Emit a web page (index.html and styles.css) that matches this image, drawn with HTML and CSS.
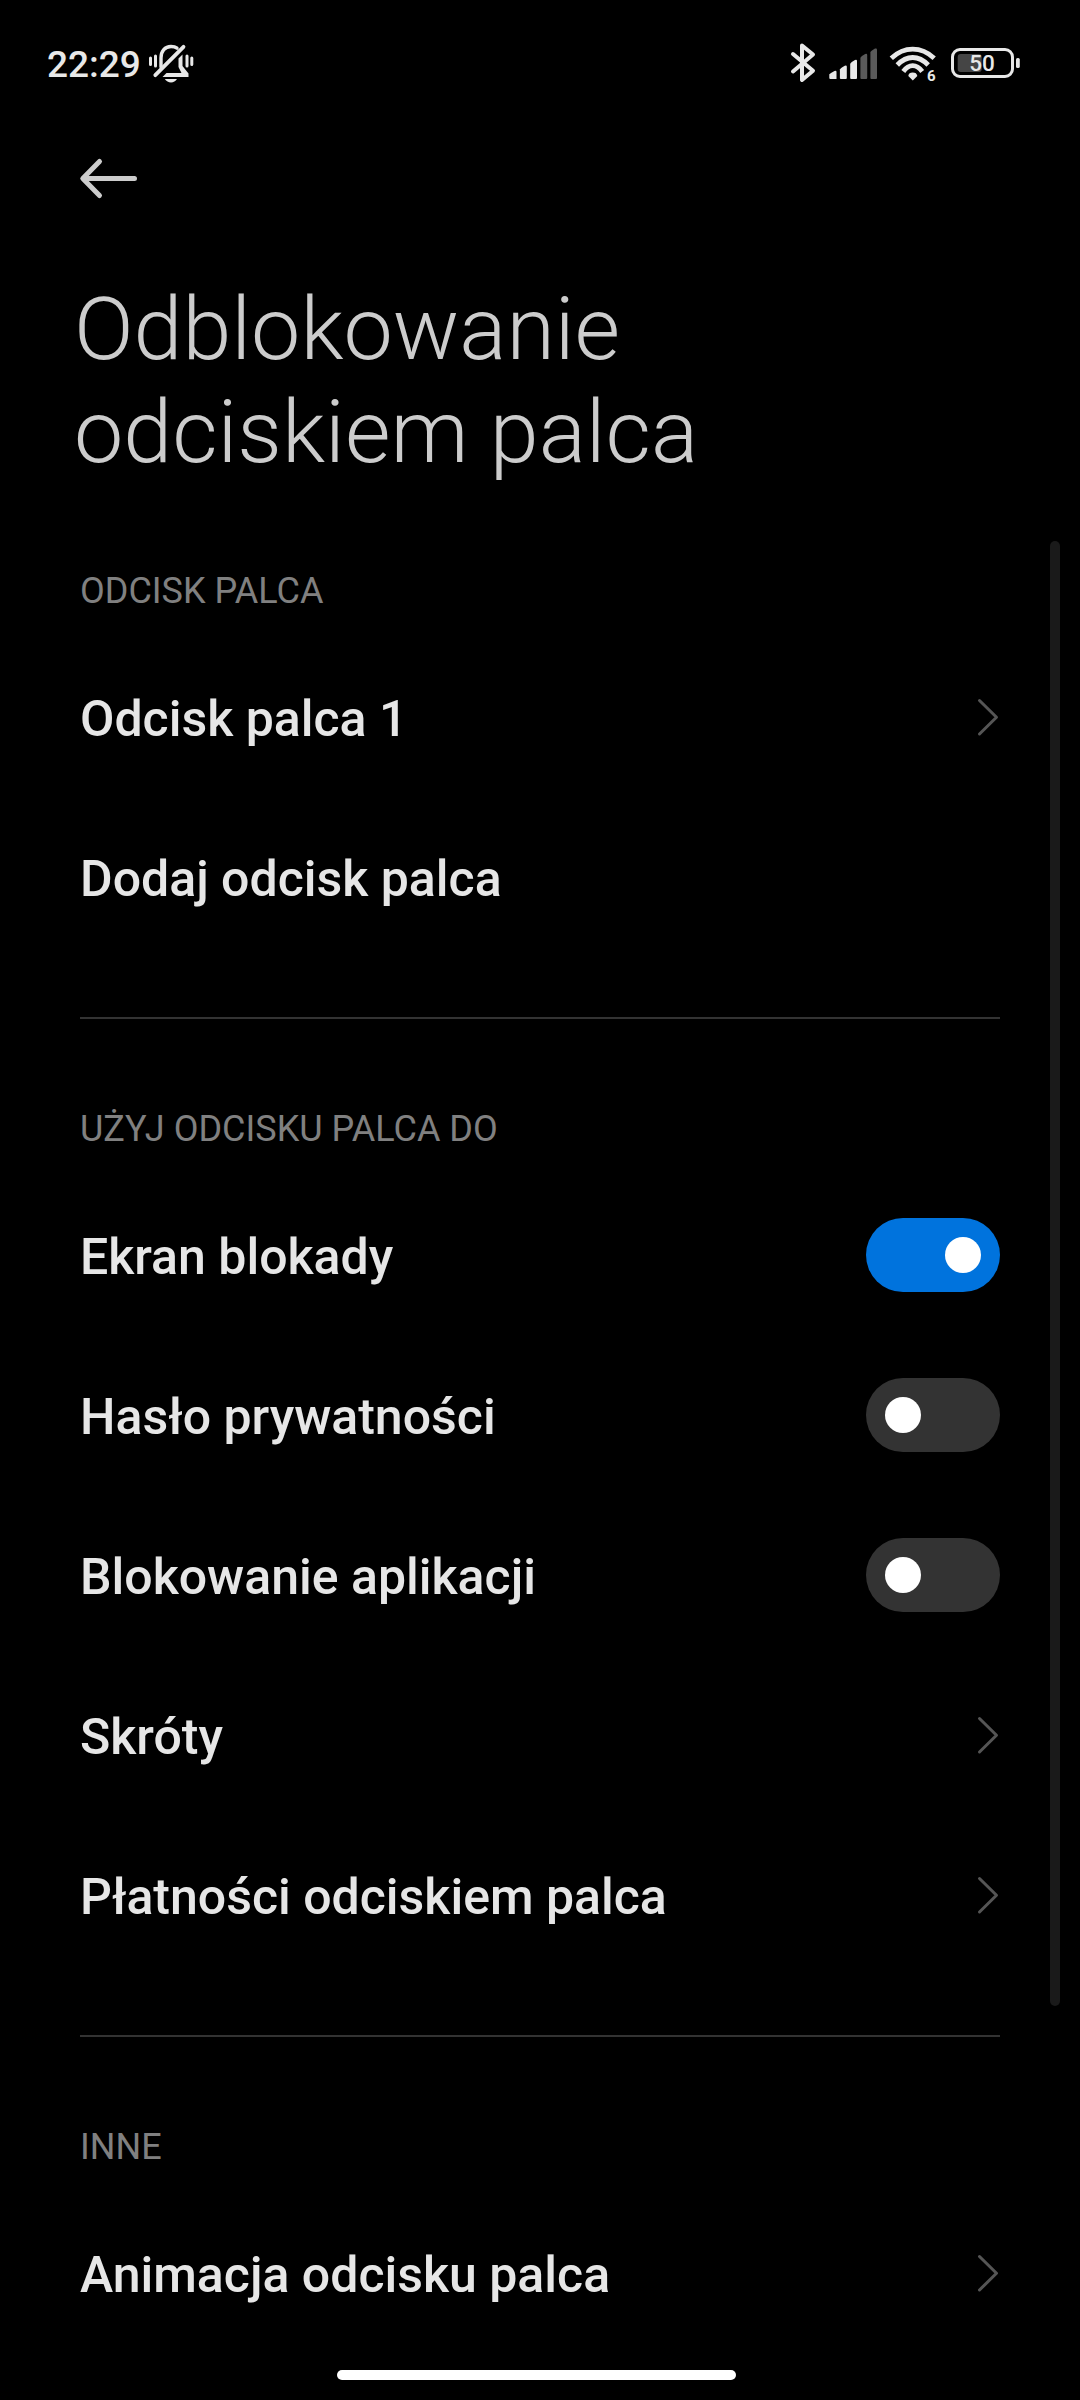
FILE: index.html
```
<!DOCTYPE html>
<html lang="pl">
<head>
<meta charset="utf-8">
<title>Odblokowanie odciskiem palca</title>
<link rel="stylesheet" href="styles.css">
</head>
<body>
<div class="screen">
  <header class="status">
    <div class="status-left">
      <span class="clock">22:29</span>
      <svg class="icon-mute" viewBox="148 42 48 42" width="48" height="42" fill="none" stroke="#e8e8e8" stroke-linecap="round" stroke-linejoin="round">
        <path d="M161 67V58C161 51 165 46.5 171 46.5C173.500 46.500 175.500 47 177 48.200" stroke-width="3.400"/>
        <path d="M155.300 75.200L183.500 46.800" stroke-width="3.800"/>
        <path d="M178.500 58.500L182.500 54.500V66L188.500 73.500V77H162.500L166.500 73H181.500L178.500 67Z" fill="#e8e8e8" stroke="none"/>
        <path d="M150.500 58V64.500M155.500 56V66M187 56V66M191.800 58V64.500" stroke-width="3"/>
        <path d="M164.800 79H177C175.500 81.300 173.500 82.500 171 82.500S166.300 81.300 164.800 79Z" fill="#e8e8e8" stroke="none"/>
      </svg>
    </div>
    <div class="status-right">
      <svg viewBox="789 42 28 42" width="28" height="42" fill="none" stroke="#e8e8e8" stroke-width="4" stroke-linecap="round" stroke-linejoin="round">
        <path d="M793 54L813 70.800L802 80V45.500L813 54.500L793 71.500"/>
      </svg>
      <svg class="icon-signal" viewBox="829 47 49 33" width="49" height="33">
        <g fill="#e8e8e8">
          <path d="M829.300 74.500Q829.500 73.500 834.500 71Q836.500 70.300 836.500 72V79H830.300Q829.300 79 829.300 78Z"/>
          <path d="M839.900 69.500Q840 68.500 844.800 65.700Q846.800 65 846.800 66.700V78Q846.800 79 845.800 79H840.900Q839.900 79 839.900 78Z"/>
          <path d="M850.200 64Q850.400 62.500 855 60Q857 59.300 857 61V78Q857 79 856 79H851.200Q850.200 79 850.200 78Z"/>
        </g>
        <g fill="#5a5a5a">
          <path d="M860.400 58Q860.600 56.500 865.200 54Q867.200 53.300 867.200 55V78Q867.200 79 866.200 79H861.400Q860.400 79 860.400 78Z"/>
          <path d="M870.400 52.500Q870.600 51 875 48.600Q877 47.900 877 49.600V78Q877 79 876 79H871.400Q870.400 79 870.400 78Z"/>
        </g>
      </svg>
      <svg class="icon-wifi" viewBox="889 45 48 38" width="48" height="38" fill="none" stroke="#e8e8e8" stroke-width="4.800">
        <path d="M891.300 58.300Q901 49.200 912.700 49.200T934.200 58.300"/>
        <path d="M897.300 65Q904.500 57.500 912.700 57.500T928.200 65"/>
        <path d="M903.300 71.500Q907.500 65.700 912.700 65.700T922.200 71.500"/>
        <path d="M908.300 76Q908.700 72.600 912.700 72.600T917.300 76L912.800 80.500Z" fill="#e8e8e8" stroke="none"/>
        <text x="927" y="81" class="wifi-gen">6</text>
      </svg>
      <svg class="icon-battery" viewBox="950 47 71 32" width="71" height="32">
        <rect x="952.500" y="49.500" width="60" height="27" rx="7.500" fill="none" stroke="#e8e8e8" stroke-width="3"/>
        <rect x="957.700" y="54" width="24" height="18" rx="3" fill="#454545"/>
        <rect x="1016" y="58" width="3.800" height="10" rx="1.600" fill="#e8e8e8"/>
        <text x="969.200" y="71.300" class="battery-level">50</text>
      </svg>
    </div>
  </header>

  <nav class="toolbar">
    <svg viewBox="77 157 64 43" width="64" height="43" fill="none" stroke="#ccc" stroke-width="5" stroke-linecap="round" stroke-linejoin="round">
      <path d="M134.500 178.500H83M99.500 161.500L82.800 178.500L99.500 195.500"/>
    </svg>
  </nav>

  <h1 class="title">Odblokowanie<br>odciskiem palca</h1>

  <main class="list">
    <section class="group">
      <h2 class="caption">ODCISK PALCA</h2>
      <div class="row"><span class="label">Odcisk palca 1</span><svg class="chevron" viewBox="0 0 24 40" width="24" height="40"><path d="M3.500 3.500L20.500 20.300L3.500 37"/></svg></div>
      <div class="row"><span class="label">Dodaj odcisk palca</span></div>
    </section>
    <section class="group">
      <h2 class="caption">UŻYJ ODCISKU PALCA DO</h2>
      <div class="row"><span class="label">Ekran blokady</span><span class="switch switch-on"><span class="knob"></span></span></div>
      <div class="row"><span class="label">Hasło prywatności</span><span class="switch"><span class="knob"></span></span></div>
      <div class="row"><span class="label">Blokowanie aplikacji</span><span class="switch"><span class="knob"></span></span></div>
      <div class="row"><span class="label">Skróty</span><svg class="chevron" viewBox="0 0 24 40" width="24" height="40"><path d="M3.500 3.500L20.500 20.300L3.500 37"/></svg></div>
      <div class="row"><span class="label">Płatności odciskiem palca</span><svg class="chevron" viewBox="0 0 24 40" width="24" height="40"><path d="M3.500 3.500L20.500 20.300L3.500 37"/></svg></div>
    </section>
    <section class="group">
      <h2 class="caption">INNE</h2>
      <div class="row"><span class="label">Animacja odcisku palca</span><svg class="chevron" viewBox="0 0 24 40" width="24" height="40"><path d="M3.500 3.500L20.500 20.300L3.500 37"/></svg></div>
    </section>
  </main>

  <div class="scrollbar"></div>
  <div class="home-indicator"></div>
</div>
</body>
</html>
```
FILE: styles.css
```
* {
  box-sizing: border-box;
}

body {
  margin: 0;
  background: #000;
  font-family: Roboto, "Liberation Sans", sans-serif;
}

svg {
  display: block;
  flex: none;
  overflow: visible;
}

.screen {
  position: relative;
  width: 1080px;
  height: 2400px;
  overflow: hidden;
  background: #000;
}

/* Status bar */
.status {
  display: flex;
  justify-content: space-between;
  height: 126px;
  padding: 0 59px 0 47px;
}

.status-left,
.status-right {
  display: flex;
  align-items: center;
  height: 126px;
}

.clock {
  width: 101px;
  padding-top: 3px;
  font-size: 37px;
  font-weight: 500;
  line-height: 43px;
  color: #e8e8e8;
}

.status-right {
  gap: 12px;
}

.icon-signal {
  margin-top: 1px;
}

.icon-wifi {
  margin: 2px 0 0 -1px;
}

.icon-battery {
  margin-left: 1px;
}

.wifi-gen {
  font-size: 15px;
  font-weight: 700;
  fill: #e8e8e8;
  stroke: none;
}

.battery-level {
  font-size: 22.5px;
  font-weight: 500;
  fill: #e8e8e8;
}

/* Header */
.toolbar {
  display: flex;
  height: 151px;
  padding: 31px 77px 0;
}

.title {
  margin: 0;
  padding-left: 74px;
  font-size: 88px;
  font-weight: 300;
  line-height: 103px;
  color: #ccc;
}

/* Preference list */
.list {
  padding: 0 80px;
}

.group {
  padding-bottom: 60px;
}

.group + .group {
  border-top: 2px solid #333;
}

.caption {
  margin: 0;
  padding: 89px 0 25px;
  font-size: 36px;
  font-weight: 400;
  line-height: 42px;
  color: #808080;
}

.group:first-child .caption {
  padding-top: 87px;
}

.row {
  display: flex;
  align-items: center;
  justify-content: space-between;
  height: 160px;
}

.label {
  padding-top: 4px;
  font-size: 50px;
  font-weight: 500;
  line-height: 58px;
  color: #e6e6e6;
}

.chevron {
  fill: none;
  stroke: #555;
  stroke-width: 3;
  stroke-linecap: round;
  stroke-linejoin: round;
}

.switch {
  display: flex;
  align-items: center;
  width: 134px;
  height: 74px;
  padding: 0 19px;
  border-radius: 37px;
  background: #333;
}

.switch-on {
  justify-content: flex-end;
  background: #0073dd;
}

.knob {
  width: 36px;
  height: 36px;
  border-radius: 50%;
  background: #fff;
}

/* Overlays */
.scrollbar {
  position: absolute;
  top: 541px;
  right: 20px;
  width: 10px;
  height: 1465px;
  border-radius: 5px;
  background: #1a1a1a;
}

.home-indicator {
  position: absolute;
  bottom: 20px;
  left: 337px;
  width: 399px;
  height: 10px;
  border-radius: 5px;
  background: #fff;
}
```
